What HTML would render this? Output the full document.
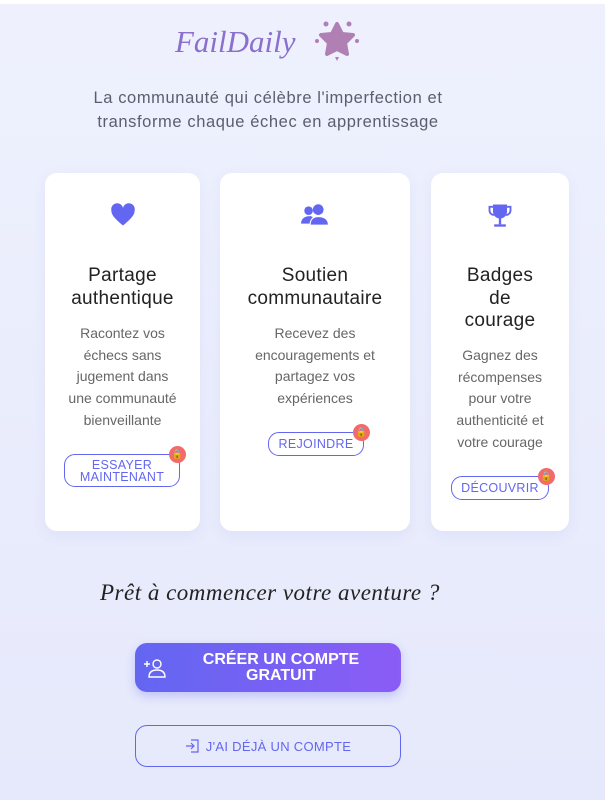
<!DOCTYPE html>
<html><head><meta charset="utf-8"><style>
*{margin:0;padding:0;box-sizing:border-box}
body{width:605px;height:800px;overflow:hidden;font-family:"Liberation Sans",sans-serif;background:linear-gradient(180deg,#eef1fd 0%,#e9ecfc 60%,#e6e9fb 100%);position:relative}
.top{position:absolute;left:0;top:0;width:605px;height:4px;background:#fff}
.logo{position:absolute;left:175px;top:24px;font-family:"Liberation Serif",serif;font-style:italic;font-size:31px;color:#8a6fcc}
.tag{position:absolute;left:68px;width:400px;top:86px;text-align:center;font-size:16.5px;line-height:24px;color:#5a5f6e;letter-spacing:.6px}
.card{position:absolute;top:173px;height:358px;background:#fff;border-radius:12px;box-shadow:0 4px 14px rgba(100,110,200,.08);text-align:center}
.card svg.ic{position:absolute;top:28px;left:50%;transform:translateX(-50%)}
.card h3{position:absolute;left:0;right:0;top:92px;font-weight:normal;font-size:19px;line-height:22.5px;color:#222;letter-spacing:.3px}
.card p{position:absolute;font-size:14px;line-height:21.7px;color:#666}
.btn{position:absolute;border:1px solid #6366f1;border-radius:11px;color:#6366f1;font-size:12.5px;line-height:12px;text-align:center;display:flex;align-items:center;justify-content:center;letter-spacing:.3px}
.lock{position:absolute;width:17px;height:17px;border-radius:50%;background:#f26b6b;top:-9px;right:-7px;font-size:9px;line-height:17px;color:#f5b700}
.cta{position:absolute;left:100px;top:580px;font-family:"Liberation Serif",serif;font-style:italic;font-size:23px;color:#222;letter-spacing:.5px}
.p1{position:absolute;left:135px;top:643px;width:266px;height:49px;border-radius:12px;background:linear-gradient(90deg,#6366f1,#8b5cf6);box-shadow:0 4px 10px rgba(99,102,241,.3);color:#fff;font-size:16px;line-height:16px;text-align:center;padding-left:26px;padding-top:9px;font-weight:bold}
.p2{position:absolute;left:135px;top:725px;width:266px;height:42px;border-radius:12px;border:1px solid #6366f1;color:#6366f1;font-size:13px;display:flex;align-items:center;justify-content:center;gap:7px;letter-spacing:.3px}
</style></head><body>
<div class="top"></div>
<div class="logo">FailDaily</div>
<svg style="position:absolute;left:314px;top:18px" width="46" height="44" viewBox="0 0 46 44"><path d="M23 6 L28 16 L39 17 L31 25 L33 36 L23 31 L13 36 L15 25 L7 17 L18 16 Z" fill="#b07fb3" stroke="#b07fb3" stroke-width="4" stroke-linejoin="round"/><circle cx="12" cy="6" r="2.5" fill="#b07fb3"/><circle cx="35" cy="6" r="2.5" fill="#b07fb3"/><circle cx="3" cy="23" r="2" fill="#b07fb3"/><circle cx="43" cy="23" r="2" fill="#b07fb3"/><path d="M21 39 L25 39 L23 43Z" fill="#b07fb3"/></svg>
<div class="tag">La communauté qui célèbre l'imperfection et transforme chaque échec en apprentissage</div>

<div class="card" style="left:45px;width:155px">
<svg class="ic" width="28" height="28" viewBox="0 0 24 24"><path d="M12 21 C5 15 2 12 2 8 A5 5 0 0 1 12 6 A5 5 0 0 1 22 8 C22 12 19 15 12 21Z" fill="#6366f1"/></svg>
<h3>Partage<br>authentique</h3>
<p style="top:150px;left:22px;right:22px">Racontez vos échecs sans jugement dans une communauté bienveillante</p>
<div class="btn" style="left:19px;top:281px;width:116px;height:33px">ESSAYER<br>MAINTENANT<span class="lock">🔒</span></div>
</div>

<div class="card" style="left:220px;width:190px">
<svg class="ic" width="30" height="24" viewBox="0 0 28 22" style="top:30px"><circle cx="8" cy="7" r="4" fill="#6366f1"/><circle cx="17" cy="6" r="5" fill="#6366f1"/><path d="M1 19 C1 14 5 12 9 12 C11 12 12 13 12 13 C10 15 9 17 9 19Z" fill="#6366f1"/><path d="M10 20 C10 15 13 13 17 13 C22 13 26 15 26 20Z" fill="#6366f1"/></svg>
<h3>Soutien<br>communautaire</h3>
<p style="top:150px;left:30px;right:30px">Recevez des encouragements et partagez vos expériences</p>
<div class="btn" style="left:48px;top:259px;width:96px;height:24px">REJOINDRE<span class="lock">🔒</span></div>
</div>

<div class="card" style="left:431px;width:138px">
<svg class="ic" width="28" height="28" viewBox="0 0 24 24"><path d="M6 3H18V9A6 6 0 0 1 6 9Z" fill="#6366f1"/><path d="M6 5H3V8A4 4 0 0 0 7 12M18 5H21V8A4 4 0 0 1 17 12" fill="none" stroke="#6366f1" stroke-width="1.6"/><rect x="11" y="14" width="2" height="6" fill="#6366f1"/><rect x="7" y="20" width="10" height="2" fill="#6366f1"/></svg>
<h3>Badges<br>de<br>courage</h3>
<p style="top:172px;left:18px;right:18px">Gagnez des récompenses pour votre authenticité et votre courage</p>
<div class="btn" style="left:20px;top:303px;width:98px;height:24px">DÉCOUVRIR<span class="lock">🔒</span></div>
</div>

<div class="cta">Prêt à commencer votre aventure ?</div>
<div class="p1">CRÉER UN COMPTE<br>GRATUIT
<svg style="position:absolute;left:8px;top:13px" width="24" height="24" viewBox="0 0 24 24" fill="none" stroke="#fff" stroke-width="1.4"><circle cx="14" cy="8" r="4"/><path d="M6 21C6 16 9 14 14 14C19 14 22 16 22 21Z"/><path d="M4 5V11M1 8H7"/></svg></div>
<div class="p2"><svg width="14" height="14" viewBox="0 0 14 14" fill="none" stroke="#6366f1" stroke-width="1.2"><path d="M6 1H13V13H6M1 7H9M6 4L9 7L6 10"/></svg>J'AI DÉJÀ UN COMPTE</div>
</body></html>
